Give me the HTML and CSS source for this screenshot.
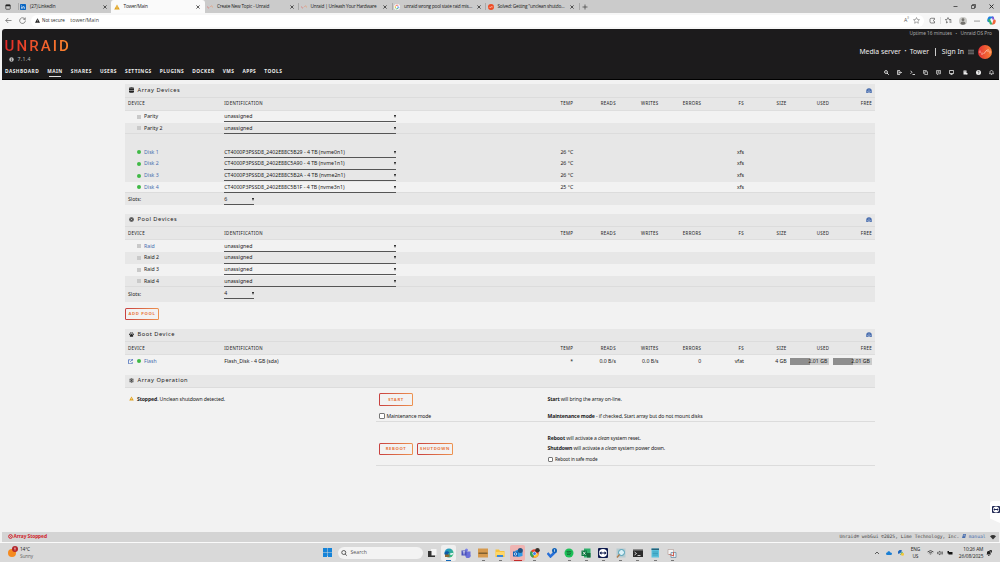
FILE: index.html
```html
<!DOCTYPE html>
<html lang="en">
<head>
    <meta charset="UTF-8" />
    <meta name="viewport" content="width=device-width, initial-scale=1.0" />
    <title>Tower/Main</title>
    <link rel="stylesheet" href="styles.css">
</head>
<body>

<svg class="defs" width="0" height="0">
    <defs>
        <linearGradient id="flame" x1="0" y1="0" x2="1" y2="0">
            <stop offset="0" stop-color="#e22f35" />
            <stop offset="1" stop-color="#fb8233" />
        </linearGradient>
        <linearGradient id="edgeFill" x1="0" y1="0" x2="1" y2="1">
            <stop offset="0" stop-color="#1c8fd6" />
            <stop offset="1" stop-color="#43c56b" />
        </linearGradient>
    </defs>
    <symbol id="close" viewBox="0 0 10 10"><path d="M1 1l8 8M9 1l-8 8" fill="none" stroke="#222" stroke-width="1.8" /></symbol>
    <symbol id="warn" viewBox="0 0 12 12"><path d="M6 1l5.5 10H.5z" fill="#e0a11b" /><path d="M6 4.5v3M6 8.6v1.2" stroke="#fff" stroke-width="1" /></symbol>
    <symbol id="wave" viewBox="0 0 14 12"><path d="M1 4v4M3.5 6v4M6 7l4-4M11 2v4M13 4v4" fill="none" stroke="url(#flame)" stroke-width="1.1" opacity=".6" /></symbol>
    <symbol id="gauge" viewBox="0 0 12 10"><path d="M.5 10V6a5.5 5.5 0 0 1 11 0v4z" fill="#486dae" /><path d="M6 3v4M3 6v1.5M9 6v1.5M4.500 10V8h3v2" fill="none" stroke="#dde2ec" stroke-width="1" /></symbol>
</svg>

<!-- Browser -->
<div class="tabs">
    <div class="tab-menu">
        <svg class="ico6" viewBox="0 0 12 12"><rect x="1.5" y="1.5" width="9" height="9" rx="1.5" fill="none" stroke="#222" stroke-width="1.3" /><path d="M1.5 1.5h9v3h-9z" fill="#222" /></svg>
    </div>
    <div class="tab split">
        <svg class="fav" viewBox="0 0 12 12"><rect width="12" height="12" rx="1.5" fill="#0a66c2" /><path d="M3 5v4.5M3 2.5v1.2M5.6 9.5V5M5.6 7c0-2.4 3.4-2.4 3.4 0v2.5" fill="none" stroke="#fff" stroke-width="1.3" /></svg>
        <span class="tab-title">(27) LinkedIn</span><svg class="x"><use href="#close" /></svg>
    </div>
    <div class="tab active">
        <svg class="fav"><use href="#warn" /></svg>
        <span class="tab-title">Tower/Main</span><svg class="x"><use href="#close" /></svg>
    </div>
    <div class="tab">
        <svg class="fav"><use href="#wave" /></svg>
        <span class="tab-title">Create New Topic - Unraid</span><svg class="x"><use href="#close" /></svg>
    </div>
    <div class="tab split">
        <svg class="fav"><use href="#wave" /></svg>
        <span class="tab-title">Unraid | Unleash Your Hardware</span><svg class="x"><use href="#close" /></svg>
    </div>
    <div class="tab split">
        <svg class="fav" viewBox="0 0 12 12"><circle cx="6" cy="6" r="6" fill="#fff" /><g fill="none" stroke-width="1.6"><path d="M8.8 3.6A3.7 3.7 0 0 0 2.8 4.2" stroke="#ea4335" /><path d="M2.8 4.2a3.7 3.7 0 0 0 0 3.6" stroke="#fbbc05" /><path d="M2.8 7.8a3.7 3.7 0 0 0 5.6.9" stroke="#34a853" /><path d="M8.4 8.7C9.4 7.9 9.7 7 9.6 6H6" stroke="#4285f4" /></g></svg>
        <span class="tab-title">unraid wrong pool state raid mis&hellip;</span><svg class="x"><use href="#close" /></svg>
    </div>
    <div class="tab split">
        <svg class="fav" viewBox="0 0 12 12"><circle cx="6" cy="6" r="6" fill="#ee4a23" /><path d="M2 6.5v1M4 5v3l4-3.5v3M10 5v1.5" fill="none" stroke="#ffd9c8" stroke-width="1" /></svg>
        <span class="tab-title">Solved: Getting "unclean shutdo&hellip;</span><svg class="x"><use href="#close" /></svg>
    </div>
    <div class="new-tab split"><svg class="ico6" viewBox="0 0 12 12"><path d="M6 1v10M1 6h10" stroke="#333" stroke-width="1.3" /></svg></div>
    <div class="window-buttons">
        <svg class="ico5" viewBox="0 0 10 10"><path d="M1 5h8" stroke="#222" stroke-width="1.4" /></svg>
        <svg class="ico5" viewBox="0 0 10 10"><path d="M1 3h6v6H1zM3 3V1h6v6H7" fill="none" stroke="#222" stroke-width="1.3" /></svg>
        <svg class="ico5"><use href="#close" /></svg>
    </div>
</div>

<div class="toolbar">
    <svg class="ico7" viewBox="0 0 14 14"><path d="M13 7H1.5M6.5 2l-5 5 5 5" fill="none" stroke="#555" stroke-width="1.3" /></svg>
    <svg class="ico7" viewBox="0 0 14 14"><path d="M12 4.5A5.7 5.7 0 1 0 12.7 7M12.5 1v3.8H8.7" fill="none" stroke="#555" stroke-width="1.3" /></svg>
    <div class="address">
        <svg class="ico5" viewBox="0 0 12 12"><path d="M6 .5L12 11.5H0z" fill="#222" /><path d="M6 4v4M6 9v1.2" stroke="#fff" stroke-width="1" /></svg>
        <span class="secure">Not secure</span>
        <span class="url">tower/Main</span>
        <span class="read">A<sup>))</sup></span>
        <svg class="ico7" viewBox="0 0 14 14"><path d="M7 1l1.800 3.900 4.200.5-3.100 2.900.8 4.200L7 10.400l-3.700 2.100.8-4.200L1 5.400l4.200-.5z" fill="none" stroke="#666" stroke-width="1.1" /></svg>
    </div>
    <div class="tools">
        <svg class="ico7" viewBox="0 0 14 14"><path d="M11 5V2.500H4.500A2.500 2.500 0 0 0 2 5v4.500A2.500 2.500 0 0 0 4.500 12H11V9a2 2 0 1 1 0-4z" fill="none" stroke="#444" stroke-width="1.3" /></svg>
        <span class="bar"></span>
        <svg class="ico7" viewBox="0 0 14 14"><path d="M6 1l1.600 3.700 4 .5M6 1L4.400 4.700.5 5.200l3 2.800-.8 4L6 10M9 8h4M9 10.500h4M8.500 5.500h4" fill="none" stroke="#444" stroke-width="1.2" /></svg>
        <svg class="ico8" viewBox="0 0 16 16"><circle cx="8" cy="8" r="8" fill="#c9c9c6" /><circle cx="8" cy="5.5" r="2.8" fill="#74726e" /><path d="M2.800 13c1-5.500 9.400-5.500 10.400 0-3 3.500-7.800 3.500-10.400 0z" fill="#74726e" /></svg>
        <svg class="ico6" viewBox="0 0 12 12"><g fill="#222"><circle cx="2" cy="6" r="1.1" /><circle cx="6" cy="6" r="1.1" /><circle cx="10" cy="6" r="1.1" /></g></svg>
        <svg class="copilot" viewBox="0 0 16 16"><path d="M5 1h5c1.500 0 2 1 2.500 3H8C6 4 5 7 4 11H3C0 11 0 8 1 5s2-4 4-4z" fill="#1d7fe0" /><path d="M1 7l3 4c.5 3 1 4 3 4h3l-2-4-3-6z" fill="#35b36c" /><path d="M11 15H7c3 0 3.500-6 4.500-9H13c3 0 3 3 2 5.500S13 15 11 15z" fill="#f0663c" /><path d="M9 1h1c2 0 2.500 4 3.500 5h-4z" fill="#8150d8" /></svg>
    </div>
</div>

<!-- Page header -->
<header class="header">
    <div class="brand">
        <div class="logo">UNRAID</div>
        <div class="version">
            <svg class="ico5" viewBox="0 0 10 10"><circle cx="5" cy="5" r="4.5" fill="#bbb" /><path d="M5 2v1.300M5 4.500V8" stroke="#1c1b1c" stroke-width="1.3" /></svg>
            <span>7.1.4</span>
        </div>
    </div>
    <div class="server">
        <div class="uptime"><span>Uptime 16 minutes</span><span class="dot">&bull;</span><span>Unraid OS Pro</span></div>
        <div class="account">
            <span>Media server</span><span class="dot">&bull;</span><span>Tower</span>
            <span class="pipe"></span>
            <span>Sign In</span>
            <svg class="ico6 burger" viewBox="0 0 12 12"><path d="M0 2.500h12M0 6h12M0 9.500h12" stroke="#bbb" stroke-width="1.2" /></svg>
            <svg class="avatar" viewBox="0 0 28 28"><circle cx="14" cy="14" r="14" fill="url(#flame)" /><path d="M4 11v5M8 15v5M11 18l7-8M20 8v6M24 11v6" fill="none" stroke="#ffd3c4" stroke-width="1.5" /></svg>
        </div>
    </div>
    <nav class="nav">
        <a>DASHBOARD</a><a class="current">MAIN</a><a>SHARES</a><a>USERS</a><a>SETTINGS</a><a>PLUGINS</a><a>DOCKER</a><a>VMS</a><a>APPS</a><a>TOOLS</a>
    </nav>
    <div class="nav-icons">
        <svg class="ico5" viewBox="0 0 10 10"><circle cx="4" cy="4" r="2.9" fill="none" stroke="#eee" stroke-width="1.7" /><path d="M6 6l3.500 3.500" stroke="#eee" stroke-width="1.9" /></svg>
        <svg class="ico5" viewBox="0 0 10 10"><path d="M6 1H1v8h5M3 3h2M3 5h6M3 7h2M7 3l2 2-2 2" fill="none" stroke="#eee" stroke-width="1.5" /></svg>
        <svg class="ico5" viewBox="0 0 10 10"><path d="M1 1.500L4 4.500 1 7.500M5 9h5" fill="none" stroke="#eee" stroke-width="1.700" /></svg>
        <svg class="ico5" viewBox="0 0 10 10"><path d="M3.500 3.500h5.700v5.700H3.500zM2 6.700H.8V.8h5.900V2" fill="none" stroke="#eee" stroke-width="1.4" /></svg>
        <svg class="ico5" viewBox="0 0 10 10"><path d="M1 1h8v6.500H5L3 9.500v-2H1zM3 3.200h4M3 5.300h4" fill="none" stroke="#eee" stroke-width="1.3" /></svg>
        <svg class="ico5" viewBox="0 0 10 10"><path d="M.8 1h8.400v6H.8zM3 9h4" fill="none" stroke="#eee" stroke-width="1.6" /></svg>
        <svg class="ico5" viewBox="0 0 10 10"><path d="M1 1h6v8H1z" fill="#eee" /><path d="M2.500 3.500h3M8 7v2.500" stroke="#1c1b1c" stroke-width=".8" /><path d="M6 6h3v3H6z" fill="#eee" /></svg>
        <svg class="ico5" viewBox="0 0 10 10"><circle cx="5" cy="5" r="5" fill="#eee" /><path d="M3.500 4c0-2 3-2 3 0 0 .9-1.500 1-1.500 2M5 7v1.200" fill="none" stroke="#1c1b1c" stroke-width="1.1" /></svg>
        <svg class="ico5" viewBox="0 0 10 10"><path d="M1 7.500c1-1 1-2 1-3.500 0-4 6-4 6 0 0 1.500 0 2.500 1 3.500zM4 9.200h2" fill="none" stroke="#eee" stroke-width="1.4" /></svg>
    </div>
</header>

<main class="content">
    <!-- Array devices -->
    <section class="panel array">
        <div class="title">
            <svg class="stack" viewBox="0 0 10 12"><path d="M0 1.500Q5-.5 10 1.500v2H0zM0 4.200h10v2.800H0zM0 7.800h10v2.700Q5 12.500 0 10.500z" fill="#222" /></svg>
            <span>Array Devices</span><svg class="gauge"><use href="#gauge" /></svg>
        </div>
        <div class="row head"><span>DEVICE</span><span>IDENTIFICATION</span><span>TEMP</span><span>READS</span><span>WRITES</span><span>ERRORS</span><span>FS</span><span>SIZE</span><span>USED</span><span>FREE</span></div>
        <div class="row"><span class="name"><i class="orb none"></i>Parity</span><span class="select">unassigned</span></div>
        <div class="row shade line"><span class="name"><i class="orb none"></i>Parity 2</span><span class="select">unassigned</span></div>
        <div class="row shade"></div>
        <div class="row shade"><span class="name"><i class="orb"></i><a>Disk 1</a></span><span class="select">CT4000P3PSSD8_2402E88C5B29 - 4 TB (nvme0n1)</span><span>26 °C</span><span></span><span></span><span></span><span>xfs</span></div>
        <div class="row shade"><span class="name"><i class="orb"></i><a>Disk 2</a></span><span class="select">CT4000P3PSSD8_2402E88C5A90 - 4 TB (nvme1n1)</span><span>26 °C</span><span></span><span></span><span></span><span>xfs</span></div>
        <div class="row shade"><span class="name"><i class="orb"></i><a>Disk 3</a></span><span class="select">CT4000P3PSSD8_2402E88C5B2A - 4 TB (nvme2n1)</span><span>26 °C</span><span></span><span></span><span></span><span>xfs</span></div>
        <div class="row line"><span class="name"><i class="orb"></i><a>Disk 4</a></span><span class="select">CT4000P3PSSD8_2402E88C5B1F - 4 TB (nvme3n1)</span><span>25 °C</span><span></span><span></span><span></span><span>xfs</span></div>
        <div class="row shade"><span>Slots:</span><span class="select short">6</span></div>
    </section>

    <!-- Pool devices -->
    <section class="panel pool">
        <div class="title">
            <svg class="ico5" viewBox="0 0 12 12"><circle cx="6" cy="6" r="5.5" fill="#333" /><circle cx="6" cy="6" r="3.2" fill="none" stroke="#ccc" stroke-width=".8" /><circle cx="6" cy="6" r="1.2" fill="#eee" /></svg>
            <span>Pool Devices</span><svg class="gauge"><use href="#gauge" /></svg>
        </div>
        <div class="row head"><span>DEVICE</span><span>IDENTIFICATION</span><span>TEMP</span><span>READS</span><span>WRITES</span><span>ERRORS</span><span>FS</span><span>SIZE</span><span>USED</span><span>FREE</span></div>
        <div class="row"><span class="name"><i class="orb none"></i><a>Raid</a></span><span class="select">unassigned</span></div>
        <div class="row shade"><span class="name"><i class="orb none"></i>Raid 2</span><span class="select">unassigned</span></div>
        <div class="row"><span class="name"><i class="orb none"></i>Raid 3</span><span class="select">unassigned</span></div>
        <div class="row shade line"><span class="name"><i class="orb none"></i>Raid 4</span><span class="select">unassigned</span></div>
        <div class="row shade slots"><span>Slots:</span><span class="select short">4</span></div>
    </section>
    <button class="btn add">ADD POOL</button>

    <!-- Boot device -->
    <section class="panel boot">
        <div class="title">
            <svg class="ico5" viewBox="0 0 12 12"><g fill="#222"><ellipse cx="1.8" cy="5.5" rx="1.5" ry="2" /><ellipse cx="4.3" cy="2.3" rx="1.5" ry="2" /><ellipse cx="7.7" cy="2.3" rx="1.5" ry="2" /><ellipse cx="10.2" cy="5.5" rx="1.5" ry="2" /><path d="M6 5c2 0 4 3 4 5s-2 1.500-4 1.500S2 12 2 10s2-5 4-5z" /></g></svg>
            <span>Boot Device</span><svg class="gauge"><use href="#gauge" /></svg>
        </div>
        <div class="row head"><span>DEVICE</span><span>IDENTIFICATION</span><span>TEMP</span><span>READS</span><span>WRITES</span><span>ERRORS</span><span>FS</span><span>SIZE</span><span>USED</span><span>FREE</span></div>
        <div class="row">
            <span class="name flash"><svg class="ico5" viewBox="0 0 10 10"><path d="M5 1.500H1v8h7.500V6M6.500.8h2.700v2.700M9 1L4.500 5.500" fill="none" stroke="#3a62b5" stroke-width="1.4" /></svg><i class="orb"></i><a>Flash</a></span>
            <span>Flash_Disk - 4 GB (sda)</span><span>*</span><span>0.0 B/s</span><span>0.0 B/s</span><span>0</span><span>vfat</span><span>4 GB</span>
            <span class="usage">2.01 GB</span><span class="usage">2.01 GB</span>
        </div>
    </section>

    <!-- Array operation -->
    <section class="panel">
        <div class="title">
            <svg class="ico5" viewBox="0 0 12 12"><path d="M6 0v12M1 3l10 6M11 3L1 9M4 1l2 2 2-2M4 11l2-2 2 2M1 5l2.500-.5L3 2M11 5l-2.500-.5L9 2M1 7l2.500.5L3 10M11 7l-2.500.5L9 10" fill="none" stroke="#222" stroke-width="1.1" /></svg>
            <span>Array Operation</span>
        </div>
        <div class="operation">
            <div class="state"><svg class="ico5"><use href="#warn" /></svg><span><b>Stopped</b>. Unclean shutdown detected.</span></div>
            <div class="actions">
                <div class="action start"><div><button class="btn">START</button></div><p><b>Start</b> will bring the array on-line.</p></div>
                <div class="action maintenance"><label><i class="box"></i>Maintenance mode</label><p><b>Maintenance mode</b> - if checked, Start array but do not mount disks</p></div>
                <div class="action power">
                    <div class="buttons"><button class="btn">REBOOT</button><button class="btn wide">SHUTDOWN</button></div>
                    <div class="notes">
                        <p><b>Reboot</b> will activate a <em>clean</em> system reset.</p>
                        <p><b>Shutdown</b> will activate a <em>clean</em> system power down.</p>
                        <label class="safe"><i class="box"></i>Reboot in safe mode</label>
                    </div>
                </div>
            </div>
        </div>
    </section>
</main>

<footer class="footer">
    <svg class="ico5" viewBox="0 0 10 10"><circle cx="5" cy="5" r="3.7" fill="none" stroke="#cf1f2b" stroke-width="2" /><path d="M3.500 3.500l3 3M6.500 3.500l-3 3" stroke="#cf1f2b" stroke-width="1" /></svg>
    <b>Array Stopped</b>
    <span class="copyright">Unraid® webGui ©2025, Lime Technology, Inc.
        <a><svg class="book" viewBox="0 0 10 10"><path d="M3 0h7L8 10H0z" fill="#486dae" /><path d="M4 2.500h4M3.500 4.500h4" stroke="#ddd" /></svg> manual</a></span>
    <svg class="ico6" viewBox="0 0 12 10"><path d="M0 3.500Q6-1.500 12 3.500L6 10z" fill="#333" /></svg>
</footer>

<!-- Windows taskbar -->
<div class="taskbar">
    <div class="weather">
        <svg class="sun" viewBox="0 0 20 22"><circle cx="8" cy="14" r="8" fill="#f58a1f" /><circle cx="14" cy="6" r="6" fill="#b3262b" /><path d="M14 3v6M12.500 4.500h2.500" stroke="#f5dada" stroke-width="1.3" /></svg>
        <div><div>14°C</div><div class="muted">Sunny</div></div>
    </div>
    <div class="apps">
        <svg class="win" viewBox="0 0 20 20"><path d="M0 0h9.500v9.500H0zM10.500 0H20v9.500h-9.500zM0 10.500h9.500V20H0zM10.500 10.500H20V20h-9.500z" fill="#1583d8" /></svg>
        <div class="search"><svg class="ico6" viewBox="0 0 12 12"><circle cx="5.5" cy="5" r="4" fill="none" stroke="#222" stroke-width="1.4" /><path d="M8.500 8l3 3.500" stroke="#222" stroke-width="1.4" /></svg><span>Search</span></div>
        <div class="app"><svg viewBox="0 0 20 20"><path d="M8 2h11v12H8z" fill="#f5f5f5" /><path d="M2 6h7v9h7v3H2z" fill="#333" /></svg></div>
        <div class="app lit open"><svg viewBox="0 0 20 20"><circle cx="10" cy="10" r="9" fill="url(#edgeFill)" /><path d="M1 10c2-5 9-5 10 0-3-1-4 3-1 6-5 2-9-2-9-6z" fill="#0d5aa7" /><path d="M12 11c2-1 6-1 7-1 0 3-4 5-7 3z" fill="#e6f5f5" /><path d="M2 13h9v5H2z" fill="#8a6a35" /></svg></div>
        <div class="app"><svg viewBox="0 0 20 20"><circle cx="11" cy="4" r="3" fill="#7b83eb" /><path d="M7 7h12v6a5 5 0 0 1-10 4z" fill="#6a70d8" /><path d="M1 5h10v10H1z" fill="#4b53bc" /><path d="M3.500 7.500h5M6 7.500V13" stroke="#fff" stroke-width="1.5" /></svg></div>
        <div class="app open"><svg viewBox="0 0 20 20"><path d="M0 1h20v18H0z" fill="#d69a4e" /><path d="M1 9h18v3H1z" fill="#80602f" /></svg></div>
        <div class="app open"><svg viewBox="0 0 20 20"><path d="M1 3h7l2 3h9v12H1z" fill="#f7c23d" /><path d="M1 8h18v7H1z" fill="#ffd766" /><path d="M4 14h12v4H4z" fill="#3b87d8" /></svg></div>
        <div class="app alert open"><svg viewBox="0 0 20 20"><path d="M5 5l14-3v14l-8 2-6-3z" fill="#2f9be6" /><path d="M0 7h10v10H0z" fill="#0f5fb5" /><circle cx="5" cy="12" r="2.5" fill="none" stroke="#fff" stroke-width="1.4" /><circle cx="14.5" cy="5" r="5" fill="#24527f" /></svg></div>
        <div class="app open"><svg viewBox="0 0 20 20"><circle cx="9" cy="11" r="8.5" fill="#e4402f" /><path d="M9 11L2 6a8.500 8.500 0 0 0 4 13.500z" fill="#35a453" /><path d="M9 11l8.500 0a8.500 8.500 0 0 1-10 8.300z" fill="#f9c32f" /><circle cx="9" cy="11" r="4" fill="#fff" /><circle cx="9" cy="11" r="3" fill="#3f7de8" /><circle cx="15" cy="4.5" r="4.5" fill="#38322c" /></svg></div>
        <div class="app"><svg viewBox="0 0 20 20"><path d="M1 10l6 7L18 6" fill="none" stroke="#2870d8" stroke-width="5" /><circle cx="15" cy="5" r="5" fill="#1363b8" /><path d="M15 2.500v5" stroke="#fff" stroke-width="1.3" /></svg></div>
        <div class="app open"><svg viewBox="0 0 20 20"><circle cx="10" cy="10" r="9" fill="#1cc158" /><path d="M5 7q5-1.500 10 1M5.500 10q4.500-1 8.500 1M6 13q4-1 7 1" fill="none" stroke="#164f2b" stroke-width="1.4" /></svg></div>
        <div class="app open"><svg viewBox="0 0 20 20"><path d="M6 1h13v18H6z" fill="#2fae6b" /><path d="M12 10h7v9h-7z" fill="#17693c" /><path d="M1 5h11v11H1z" fill="#0f7a42" /><path d="M4 7.500l5 6M9 7.500l-5 6" stroke="#fff" stroke-width="1.6" /></svg></div>
        <div class="app open"><svg viewBox="0 0 20 20"><rect width="20" height="20" rx="2" fill="#0e1a4e" /><circle cx="10" cy="10" r="8" fill="#fff" /><path d="M2.500 10L7 6.500V9h6V6.500l4.500 3.500-4.500 3.500V11H7v2.500z" fill="#0e1a4e" /></svg></div>
        <div class="app open"><svg viewBox="0 0 20 20"><path d="M1 1h18v18H1z" fill="#b6cbd0" /><circle cx="11" cy="9" r="6" fill="#d9f0f7" stroke="#4a9db5" stroke-width="2" /><path d="M7 13l-5 6" stroke="#b17848" stroke-width="2.5" /></svg></div>
        <div class="app open"><svg viewBox="0 0 20 20"><path d="M0 2h20v16H0z" fill="#2b2b2b" /><path d="M0 2h20v3H0z" fill="#8d8d8d" /><path d="M3 8l4 3-4 3M9 15h6" fill="none" stroke="#fff" stroke-width="1.5" /></svg></div>
        <div class="app open"><svg viewBox="0 0 20 20"><path d="M3 1h15v18H3z" fill="#5cc1dc" /><path d="M3 1h15v3H3z" fill="#24627a" /><path d="M5 8h11M5 11h11M5 14h11" stroke="#2a8eae" stroke-width="1.3" /></svg></div>
        <div class="app open"><svg viewBox="0 0 20 20"><path d="M2 3h11v10H2z" fill="#f4f4f4" stroke="#a58a83" /><path d="M8 9h10v10H8z" fill="#e4f0f6" stroke="#698ca5" stroke-width="1.5" /><path d="M5 13l9 3M13 8v8" stroke="#d1503f" stroke-width="1.8" /></svg></div>
    </div>
    <div class="tray">
        <svg class="ico6" viewBox="0 0 12 12"><path d="M2 8l4-4 4 4" fill="none" stroke="#222" stroke-width="1.4" /></svg>
        <svg class="ico6" viewBox="0 0 12 10"><path d="M2.500 9a2.500 2.500 0 0 1 0-5C4 0 8 1 8.500 4c5 0 4 5 1 5z" fill="#1a7fd4" /></svg>
        <svg class="ico6" viewBox="0 0 12 12"><path d="M1 8A5 5 0 0 1 8 1L6 5z" fill="#1d65bb" /><path d="M4 10L8 3l3 5z" fill="#2aa46b" /><circle cx="9" cy="8.5" r="3" fill="#f5c83a" /></svg>
        <div class="lang">ENG<br>US</div>
        <svg class="ico7" viewBox="0 0 12 12"><path d="M1 5q5-4.500 10 0M3 7q3-2.500 6 0M5 9q1-1 2 0" fill="none" stroke="#222" stroke-width="1.3" /></svg>
        <svg class="ico6" viewBox="0 0 12 12"><path d="M1 4.500h2L6 2v8L3 7.500H1zM8 4q1.500 2 0 4M10 2.500q2.500 3.500 0 7" fill="none" stroke="#222" stroke-width="1.1" /></svg>
        <svg class="ico6" viewBox="0 0 12 12"><path d="M3 4h8v5H3zM1 2h3v5H1z" fill="#111" /></svg>
        <div class="clock">10:26 AM<br>26/08/2025</div>
        <svg class="ico6" viewBox="0 0 12 12"><path d="M1 9l1-2V4c1-3 6-3 7 0v3l1 2z" fill="#222" /><path d="M4 11h3M7 1h4v4" stroke="#222" stroke-width="1.5" /></svg>
    </div>
</div>

<!-- Remote control flap over the page edge -->
<div class="flap">
    <svg viewBox="0 0 16 14"><rect width="16" height="14" rx="2" fill="#1d2552" /><circle cx="8" cy="7" r="6" fill="#fff" /><path d="M2.500 7L6 4.500V6h4V4.500L13.500 7 10 9.500V8H6v1.500z" fill="#1d2552" /></svg>
</div>

</body>
</html>
```

FILE: styles.css
```css
* {
    box-sizing: border-box;
}

body {
    margin: 0;
    width: 1000px;
    height: 562px;
    overflow: hidden;
    display: flex;
    flex-direction: column;
    background: #f2f2f2;
    color: #1a1a1a;
    font-family: "Noto Sans", sans-serif;
    font-size: 5.2px;
    line-height: 7px;
}

svg {
    display: block;
    flex: none;
}

p {
    margin: 0;
}

.defs {
    position: absolute;
}

.ico5 { width: 5px; height: 5px; }
.ico6 { width: 6px; height: 6px; }
.ico7 { width: 7px; height: 7px; }
.ico8 { width: 8px; height: 8px; }

/* Browser tabs */
.tabs {
    display: flex;
    flex: none;
    height: 13px;
    background: #cbcbcb;
    font-family: "Open Sans", sans-serif;
    font-size: 4.7px;
    letter-spacing: -0.2px;
}

.tab-menu {
    width: 17.5px;
    padding: 3.5px 0 0 5px;
}

.tab {
    width: 93.5px;
    display: flex;
    align-items: center;
    padding-left: 2.5px;
    padding-right: 4.5px;
}

.split {
    background: linear-gradient(#999, #999) 0 3px / 0.7px 7px no-repeat;
}

.tab.active {
    background: #fafafa;
    border-radius: 3px 3px 0 0;
}

.fav {
    width: 6px;
    height: 6px;
    margin-right: 4px;
}

.tab-title {
    flex: 1;
    white-space: nowrap;
}

.x {
    width: 4px;
    height: 4px;
}

.new-tab {
    padding: 3.5px 0 0 3.5px;
}

.window-buttons {
    margin-left: auto;
    display: flex;
    align-items: center;
    gap: 13px;
    padding-right: 6px;
}

/* Browser toolbar */
.toolbar {
    display: flex;
    align-items: center;
    flex: none;
    height: 15.5px;
    padding-left: 4.5px;
    gap: 7px;
    background: #f7f7f7;
    font-family: "Open Sans", sans-serif;
}

.address {
    display: flex;
    align-items: center;
    width: 893px;
    height: 12px;
    margin-left: -1.5px;
    padding: 0 4px;
    background: #fff;
    border-radius: 6px;
}

.secure {
    margin-left: 2px;
    font-size: 4.5px;
}

.url {
    margin-left: 5.5px;
    color: #444;
    font-size: 5.3px;
}

.read {
    margin-left: auto;
    margin-right: 4px;
    color: #555;
}

.read sup {
    font-size: 3px;
    line-height: 0;
}

.tools {
    display: flex;
    align-items: center;
    gap: 7px;
    margin-left: -2px;
}

.bar {
    width: 1px;
    height: 7px;
    margin: 0 -3px;
    background: #ddd;
}

.copilot {
    width: 9px;
    height: 9px;
    margin-left: -0.5px;
}

/* Header */
.header {
    display: grid;
    grid-template-columns: auto auto;
    grid-template-rows: 36px 15px;
    justify-content: space-between;
    flex: none;
    height: 51px;
    margin: 0 1.5px;
    background: #1c1b1c;
    border-radius: 3px 3px 0 0;
    border-bottom: 0.5px solid #000;
    color: #eee;
}

.brand {
    padding: 9px 0 0 3px;
}

.logo {
    width: 68px;
    background: linear-gradient(90deg, #e22828, #ff8c2f);
    background-clip: text;
    -webkit-background-clip: text;
    color: transparent;
    font-family: "Roboto", sans-serif;
    font-size: 15px;
    font-weight: 500;
    line-height: 16px;
    letter-spacing: 2.1px;
}

.version {
    display: flex;
    align-items: center;
    gap: 3.5px;
    padding: 2px 0 0 4.5px;
    color: #bbb;
    font-size: 5.2px;
    letter-spacing: 0.3px;
}

.server {
    display: flex;
    flex-direction: column;
    align-items: flex-end;
    padding-right: 6.5px;
}

.uptime {
    display: flex;
    height: 14px;
    padding-top: 1.5px;
    color: #aaa;
    font-size: 4.75px;
}

.dot {
    margin: 0 3.5px;
    font-size: 4px;
}

.account {
    display: flex;
    align-items: center;
    height: 18px;
    font-size: 6.8px;
}

.account .dot {
    font-size: 5px;
}

.pipe {
    width: 0.8px;
    height: 8px;
    margin: 0 6px;
    background: #ccc;
}

.burger {
    margin: 0 4px 0 4px;
}

.avatar {
    width: 14px;
    height: 14px;
}

.nav {
    display: flex;
    gap: 8.1px;
    padding: 3px 0 0 3.5px;
    font-size: 4.8px;
    font-weight: 700;
    letter-spacing: 0.47px;
}

.current {
    height: 9px;
    background: linear-gradient(#ddd, #ddd) 50% 100% / 12px 1px no-repeat;
}

.nav-icons {
    display: flex;
    gap: 8.2px;
    padding: 5px 4.5px 0 0;
    justify-content: flex-end;
}

/* Content */
.content {
    flex: 1;
    width: 750px;
    margin: 0 auto;
    padding-top: 4.8px;
}

.title {
    display: flex;
    align-items: center;
    height: 13.3px;
    padding: 0 3.5px;
    background: #e7e7e7;
    border-bottom: 0.5px solid #dcdcdc;
    font-size: 5.7px;
    letter-spacing: 0.52px;
}

.title span {
    flex: 1;
    margin-left: 4px;
}

.stack {
    width: 5px;
    height: 6px;
}

.gauge {
    width: 6px;
    height: 5px;
}

.row {
    display: grid;
    grid-template-columns: 96.3px 1fr repeat(8, 42.7px);
    align-items: center;
    height: 11.8px;
    padding: 0 3px;
    white-space: nowrap;
}

.row > span:nth-child(n+3) {
    text-align: right;
}

.head {
    height: 13.2px;
    background: #e7e7e7;
    border-bottom: 1px solid #dedede;
    font-size: 4.4px;
    letter-spacing: 0.32px;
}

.shade {
    background: #e7e7e7;
}

.line {
    border-bottom: 1px solid #dcdcdc;
}

.name {
    display: flex;
    align-items: center;
    padding-left: 9px;
}

.orb {
    width: 4px;
    height: 4px;
    margin-right: 3px;
    border-radius: 50%;
    background: #3fb945;
}

.orb.none {
    border-radius: 0;
    background: #c9c9c9;
}

.row a,
.footer a {
    color: #486dae;
}

.select {
    display: flex;
    align-items: center;
    justify-content: space-between;
    width: 172px;
    height: 11.6px;
    padding-top: 1.2px;
    border-bottom: 1px solid #555;
}

.select::after {
    content: "";
    margin-right: 0.5px;
    border: 1.6px solid transparent;
    border-top: 3px solid #111;
    border-bottom: 0;
}

.select.short {
    width: 30px;
}

.slots {
    height: 15px;
}

.slots .select {
    align-self: start;
}

.array {
    margin-bottom: 8.5px;
}

.btn {
    display: block;
    width: 34px;
    height: 12.5px;
    padding: 0;
    border: 1px solid transparent;
    border-radius: 1.5px;
    background: linear-gradient(#f2f2f2, #f2f2f2) padding-box, linear-gradient(90deg, #c8403f, #ee9350) border-box;
    color: #e8763c;
    font-family: inherit;
    font-size: 4.2px;
    font-weight: 700;
    letter-spacing: 0.65px;
    line-height: 10px;
}

.btn.wide {
    width: 36px;
}

.add {
    margin: 5.5px 0 8.3px;
}

.flash {
    padding-left: 0;
}

.flash .orb {
    margin-left: 4px;
}

.usage {
    height: 7px;
    margin-left: 3.5px;
    padding-right: 2px;
    background: linear-gradient(90deg, #8e8e8e 51%, #cbcbcb 51%);
}

.boot {
    margin-bottom: 7.8px;
}

/* Array operation */
.operation {
    display: grid;
    grid-template-columns: 251px 1fr;
    font-size: 5.1px;
    letter-spacing: -0.11px;
}

.state {
    display: flex;
    gap: 3.5px;
    padding: 8px 0 0 3.5px;
}

.action {
    display: grid;
    grid-template-columns: 168.5px 1fr;
    align-items: center;
    padding-left: 3px;
}

.start {
    height: 23px;
}

.maintenance {
    height: 11px;
    border-bottom: 1px solid #dcdcdc;
}

.action label {
    display: flex;
    align-items: center;
}

.box {
    width: 5.5px;
    height: 5.5px;
    margin-right: 2px;
    border: 0.5px solid #777;
    border-radius: 1px;
    background: #fff;
}

.power {
    height: 44px;
    padding-top: 10.5px;
    border-bottom: 1px solid #dcdcdc;
}

.buttons {
    display: flex;
    gap: 4px;
}

.notes {
    display: flex;
    flex-direction: column;
    gap: 3.6px;
}

.safe {
    font-size: 4.6px;
}

/* Status bar */
.footer {
    display: flex;
    align-items: center;
    flex: none;
    height: 10.5px;
    margin: 0 1.5px;
    padding: 0 3px 0 6px;
    background: #d4d4d4;
    color: #cf1f2b;
}

.footer b {
    margin-left: 1px;
    font-size: 4.9px;
    letter-spacing: -0.1px;
}

.copyright {
    margin: 0 4px 0 auto;
    color: #444;
    font-family: "DejaVu Sans Mono", monospace;
    font-size: 4.63px;
}

.book {
    display: inline-block;
    width: 4px;
    height: 4px;
}

/* Taskbar */
.taskbar {
    display: grid;
    grid-template-columns: 322.5px 1fr auto;
    align-items: center;
    flex: none;
    height: 20px;
    border-top: 1px solid #fafafa;
    background: #d9d9d9;
    font-family: "Open Sans", sans-serif;
    font-size: 4.8px;
    line-height: 6.5px;
}

.weather {
    display: flex;
    gap: 2px;
    padding-left: 8px;
    letter-spacing: -0.15px;
}

.sun {
    width: 10px;
    height: 11px;
}

.muted {
    color: #666;
}

.apps {
    display: flex;
    align-items: center;
}

.win {
    width: 9.5px;
    height: 9.5px;
}

.search {
    display: flex;
    align-items: center;
    gap: 3.5px;
    width: 85px;
    height: 12px;
    margin: 0 0.5px 0 5.5px;
    padding-left: 3.5px;
    border-radius: 6px;
    background: #f3f3f3;
    color: #555;
    font-size: 5.2px;
}

.app {
    display: flex;
    align-items: center;
    justify-content: center;
    width: 15.2px;
    height: 16px;
    margin: 0 1px;
    border-radius: 2px;
}

.app svg {
    width: 10px;
    height: 10px;
}

.lit {
    background: #efefef;
}

.alert {
    background: #efb5b3;
}

.open {
    background-image: linear-gradient(#777, #777);
    background-size: 3px 1px;
    background-position: 50% 100%;
    background-repeat: no-repeat;
}

.lit.open {
    background-image: linear-gradient(#1368b8, #1368b8);
    background-size: 5px 1px;
}

.alert.open {
    background-image: linear-gradient(#c42b2b, #c42b2b);
    background-size: 8px 1px;
}

.tray {
    display: flex;
    align-items: center;
    gap: 3.7px;
    padding-right: 8px;
    letter-spacing: -0.1px;
}

.tray svg:nth-child(-n+2) {
    margin-right: 2.5px;
}

.lang {
    margin: 0 3px 0 3px;
    text-align: center;
}

.clock {
    margin-left: 2px;
    margin-right: -1px;
    text-align: right;
}

.flap {
    position: absolute;
    right: 0;
    top: 501px;
    width: 10px;
    height: 22px;
    padding: 5px 0 0 1.5px;
    background: #fff;
    border-radius: 3px 0 0 3px;
    clip-path: polygon(0 0, 100% 0, 100% 100%, 0 80%);
}

.flap svg {
    width: 8px;
    height: 7px;
}
```
